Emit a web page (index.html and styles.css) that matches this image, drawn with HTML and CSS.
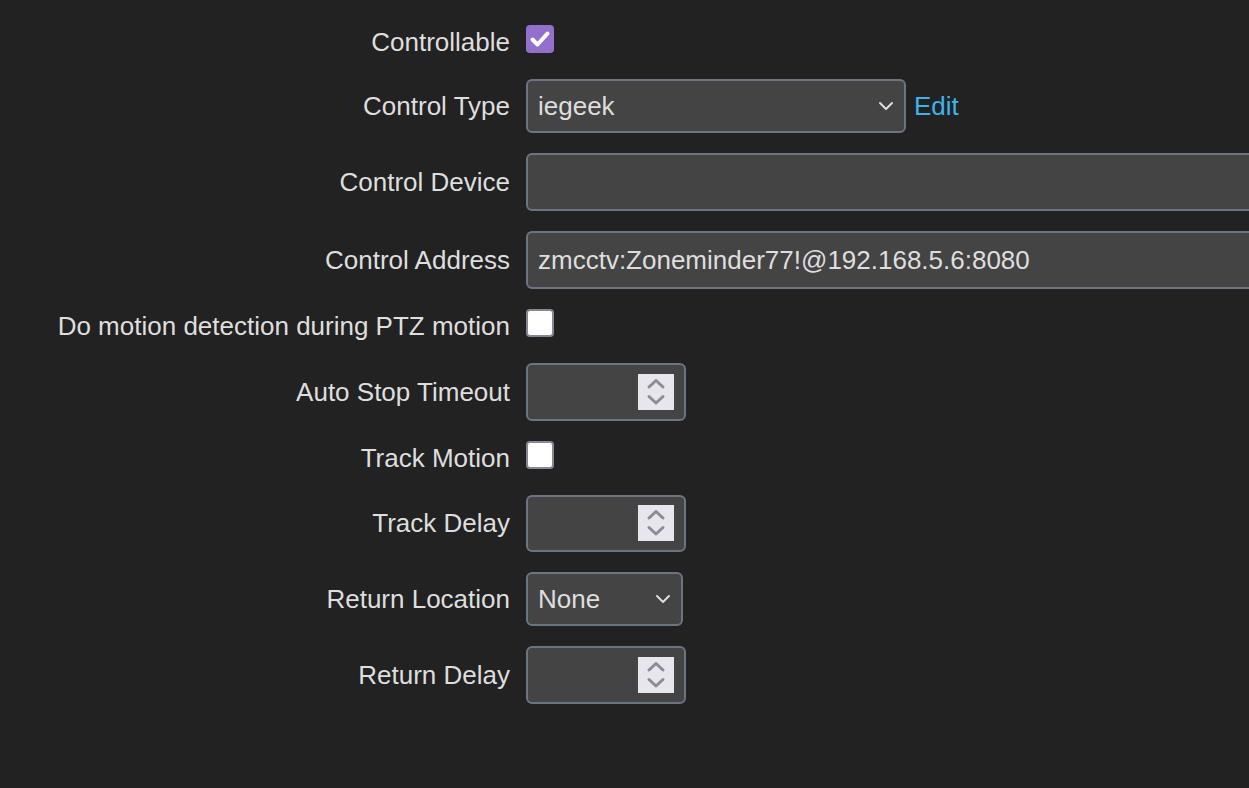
FILE: index.html
```html
<!DOCTYPE html>
<html lang="en">
<head>
<meta charset="utf-8">
<title>Control</title>
<link rel="stylesheet" href="styles.css">
</head>
<body>
<div class="form">
  <div class="row">
    <div class="label">Controllable</div>
    <div class="cell cb-cell">
      <span class="checkbox checked">
        <svg width="28" height="28" viewBox="0 0 28 28"><path d="M6.5 14.5 L11.5 19.5 L21.5 8.5" fill="none" stroke="#fff" stroke-width="4" stroke-linecap="round" stroke-linejoin="round"/></svg>
      </span>
    </div>
  </div>
  <div class="row">
    <div class="label">Control Type</div>
    <div class="cell">
      <div class="select wide-select"><span>iegeek</span>
        <svg class="chev" width="16" height="10" viewBox="0 0 16 10"><path d="M2 2 L8 8 L14 2" fill="none" stroke="#ddd" stroke-width="2" stroke-linecap="round" stroke-linejoin="round"/></svg>
      </div>
      <a class="edit" href="#">Edit</a>
    </div>
  </div>
  <div class="row">
    <div class="label">Control Device</div>
    <div class="cell"><div class="text-input"></div></div>
  </div>
  <div class="row">
    <div class="label">Control Address</div>
    <div class="cell"><div class="text-input">zmcctv:Zoneminder77!@192.168.5.6:8080</div></div>
  </div>
  <div class="row">
    <div class="label">Do motion detection during PTZ motion</div>
    <div class="cell cb-cell"><span class="checkbox"></span></div>
  </div>
  <div class="row">
    <div class="label">Auto Stop Timeout</div>
    <div class="cell">
      <div class="number"><span class="spin">
        <svg width="36" height="36" viewBox="0 0 36 36"><path d="M11 13 L18 6.5 L25 13 M11 22.5 L18 29 L25 22.5" fill="none" stroke="#8e8a99" stroke-width="3" stroke-linecap="round" stroke-linejoin="round"/></svg>
      </span></div>
    </div>
  </div>
  <div class="row">
    <div class="label">Track Motion</div>
    <div class="cell cb-cell"><span class="checkbox"></span></div>
  </div>
  <div class="row">
    <div class="label">Track Delay</div>
    <div class="cell">
      <div class="number"><span class="spin">
        <svg width="36" height="36" viewBox="0 0 36 36"><path d="M11 13 L18 6.5 L25 13 M11 22.5 L18 29 L25 22.5" fill="none" stroke="#8e8a99" stroke-width="3" stroke-linecap="round" stroke-linejoin="round"/></svg>
      </span></div>
    </div>
  </div>
  <div class="row">
    <div class="label">Return Location</div>
    <div class="cell">
      <div class="select small-select"><span>None</span>
        <svg class="chev" width="16" height="10" viewBox="0 0 16 10"><path d="M2 2 L8 8 L14 2" fill="none" stroke="#ddd" stroke-width="2" stroke-linecap="round" stroke-linejoin="round"/></svg>
      </div>
    </div>
  </div>
  <div class="row">
    <div class="label">Return Delay</div>
    <div class="cell">
      <div class="number"><span class="spin">
        <svg width="36" height="36" viewBox="0 0 36 36"><path d="M11 13 L18 6.5 L25 13 M11 22.5 L18 29 L25 22.5" fill="none" stroke="#8e8a99" stroke-width="3" stroke-linecap="round" stroke-linejoin="round"/></svg>
      </span></div>
    </div>
  </div>
</div>
</body>
</html>
```

FILE: styles.css
```css
html, body {
  margin: 0;
  padding: 0;
  background: #222222;
  overflow: hidden;
}
body {
  width: 1249px;
  height: 788px;
  font-family: "Liberation Sans", Arial, sans-serif;
  font-size: 26px;
  color: #dedede;
}
.form {
  padding-top: 15px;
  width: 1249px;
  overflow: hidden;
}
.row {
  display: grid;
  grid-template-columns: 510px 1fr;
  column-gap: 16px;
  align-items: center;
  padding: 10px 0;
}
.label {
  text-align: right;
  white-space: nowrap;
  line-height: 30px;
}
.cell {
  display: flex;
  align-items: center;
  min-width: 0;
  overflow: hidden;
}
.cb-cell {
  height: 34px;
  align-items: flex-start;
}
.checkbox {
  box-sizing: border-box;
  width: 28px;
  height: 28px;
  border-radius: 4px;
  background: #ffffff;
  border: 2px solid #8a8696;
  display: block;
}
.checkbox.checked {
  background: #9370cc;
  border: none;
}
.checkbox svg {
  display: block;
}
.select, .text-input, .number {
  box-sizing: border-box;
  background: #444444;
  border: 2px solid #6b7480;
  border-radius: 6px;
  color: #dedede;
}
.select {
  height: 54px;
  display: flex;
  align-items: center;
  justify-content: space-between;
  padding: 0 10px 0 10px;
}
.wide-select {
  width: 380px;
}
.small-select {
  width: 157px;
}
.chev {
  display: block;
}
.edit {
  margin-left: 8px;
  color: #3fb3e8;
  text-decoration: none;
}
.text-input {
  width: 900px;
  flex: none;
  height: 58px;
  display: flex;
  align-items: center;
  padding: 0 10px;
  white-space: nowrap;
}
.number {
  width: 160px;
  height: 57.5px;
  display: flex;
  align-items: center;
  justify-content: flex-end;
  padding-right: 10px;
}
.spin {
  width: 36px;
  height: 36px;
  background: #e8e6ed;
  display: block;
}
.spin svg {
  display: block;
}
```
